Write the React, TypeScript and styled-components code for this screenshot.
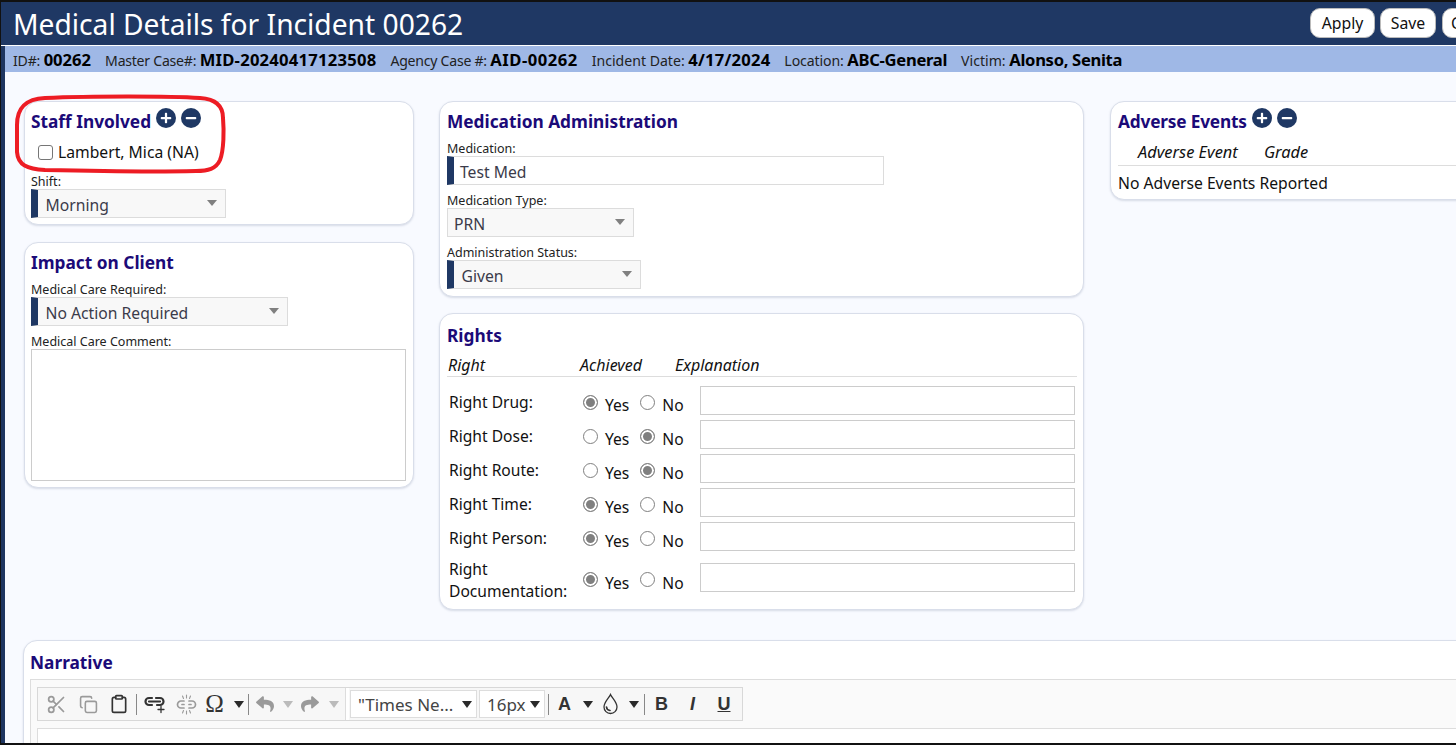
import React from "react";
import styled, { createGlobalStyle } from "styled-components";
import { Scissors, Copy, Clipboard } from "lucide-react";
import { FaReply, FaShare, FaPlus, FaMinus } from "react-icons/fa";

const Global = createGlobalStyle`
  html, body { margin: 0; padding: 0; height: 100%; overflow: hidden; background: #f8faff; }
  * { box-sizing: border-box; }
  body { font-family: "Noto Sans", "Open Sans", sans-serif; color: #111; }
`;
const Frame = styled.div`
  position: relative; width: 1456px; height: 745px; overflow: hidden;
  border-top: 2px solid #111; border-left: 1px solid #111; border-bottom: 2px solid #111;
  background: #f8faff; display: flex;
`;
const Edge = styled.div`width: 4px; flex: none; background: #1e3560;`;
const Page = styled.div`flex: 1; min-width: 0; display: flex; flex-direction: column;`;
const Header = styled.header`
  height: 44px; flex: none; background: #1f3864; border-bottom: 1px solid #fff;
  display: flex; align-items: center; margin-left: -4px; padding-left: 12px;
`;
const Title = styled.h1`flex: 1; margin: 0; font-size: 28.2px; font-weight: 400; color: #fff; white-space: nowrap; line-height: 44px;`;
const Actions = styled.div`display: flex; flex: none; width: 146px; overflow: hidden; margin-top: -2px;`;
const HeadButton = styled.button<{ $w: number; $gap: number }>`
  height: 30px; padding: 0 0 0 ${p => (p.$gap ? 0 : 8)}px; border-radius: 10px; border: 1px solid #bbb; background: #fff;
  font: 400 15.8px "Noto Sans", sans-serif; color: #111; width: ${p => p.$w}px; margin-right: ${p => p.$gap}px; flex: none; text-align: ${p => (p.$gap ? "center" : "left")};
`;
const InfoBar = styled.div`
  height: 26px; flex: none; background: #9fb8e6; display: flex; align-items: center; gap: 14px; padding-left: 8px;
  font-size: 14.1px; white-space: nowrap; color: #222;
`;
const InfoItem = styled.span<{ $ls?: number }>`letter-spacing: ${p => p.$ls ?? 0}px;`;
const InfoValue = styled.b<{ $ls?: number }>`font-size: 16.6px; font-weight: 700; color: #000; letter-spacing: ${p => p.$ls ?? 0}px;`;
const Content = styled.main`
  padding: 29px 0 0 19px; display: flex; flex-direction: column; gap: 30px; width: 1560px;
`;
const Columns = styled.div`display: flex; gap: 26px; align-items: flex-start;`;
const Col = styled.div<{ $w: number; $gap?: number; $shift?: number }>`
  width: ${p => p.$w}px; flex: none; display: flex; flex-direction: column; gap: ${p => p.$gap ?? 17}px; margin-left: ${p => p.$shift ?? 0}px;
`;
const Panel = styled.section<{ $h?: number; $pad?: number; $top?: number }>`
  background: #fff; border: 1px solid #d9deea; border-radius: 14px; box-shadow: 0 1px 2px rgba(120,130,160,.25);
  padding: ${p => p.$top ?? 8}px 6px 0 ${p => p.$pad ?? 6}px; height: ${p => p.$h}px; overflow: hidden;
`;
const PanelHead = styled.div`display: flex; align-items: flex-start; gap: 5px; height: 24px;`;
const PanelTitle = styled.h2<{ $ls?: number }>`margin: 0; font-size: 17.3px; line-height: 24px; font-weight: 700; color: #1b0a78; white-space: nowrap; letter-spacing: ${p => p.$ls ?? 0}px;`;
const RoundIcon = styled.span`
  width: 20px; height: 20px; border-radius: 50%; background: #1f3864; color: #fff; display: inline-flex; align-items: center; justify-content: center; margin-top: -2px; font-size: 12px;
`;
const CheckRow = styled.label`display: flex; align-items: center; gap: 5px; padding-left: 7px; height: 24px; margin-top: 6px; font-size: 15.7px;`;
const Check = styled.span`width: 15px; height: 15px; border: 1.3px solid #767676; border-radius: 3px; background: #fff;`;
const FieldLabel = styled.div`font-size: 12.5px; line-height: 15px; color: #222; white-space: nowrap;`;
const Accent = styled.div<{ $w: number; $flag?: boolean }>`
  width: ${p => p.$w}px; height: 29px; display: flex; align-items: center; justify-content: space-between;
  border: 1px solid #dcdcdc; border-left: ${p => (p.$flag ? "7px solid #1f3864" : "1px solid #dcdcdc")};
  background: #f8f8f8; color: #3b3b4a; font-size: 15.7px; padding: 2px 8px 0 ${p => (p.$flag ? 7.5 : 6)}px;
`;
const TextField = styled(Accent)`background: #fff; border-width: 1px 1px 1px 7px; border-left-color: #1f3864; padding-left: 6px;`;
const Caret = styled.span`width: 0; height: 0; border-left: 5px solid transparent; border-right: 5px solid transparent; border-top: 6px solid #808080; margin-top: -3px;`;
const Stack = styled.div<{ $t?: number }>`margin-top: ${p => p.$t ?? 0}px;`;
const Area = styled.div`width: 375px; height: 132px; border: 1px solid #ccc; background: #fff;`;
const ItalicHead = styled.div`
  display: grid; grid-template-columns: 132px 95px 1fr; font-style: italic; font-size: 16px; line-height: 23px; height: 22px;
  padding: 6px 0 0 1px; border-bottom: 1px solid #ddd; box-sizing: content-box;
`;
const RightRow = styled.div<{ $h: number }>`
  display: grid; grid-template-columns: 134px 119px 375px; align-items: center; height: ${p => p.$h}px; padding-left: 2px; font-size: 15.6px; line-height: 22px;
`;
const RightName = styled.span`position: relative; top: 2px;`;
const Rows = styled.div`margin-top: 6px;`;
const Choice = styled.div`display: flex; align-items: center; gap: 11px; font-size: 15.6px; position: relative; top: 2px;`;
const Opt = styled.span`display: inline-flex; align-items: center; gap: 7px;`;
const OptText = styled.span`position: relative; top: 3px;`;
const Radio = styled.span<{ $on?: boolean }>`
  width: 15px; height: 15px; border-radius: 50%; border: 1.3px solid #808080; background: ${p => (p.$on ? "#808080" : "#fff")};
  box-shadow: inset 0 0 0 ${p => (p.$on ? "2px" : "0")} #fff;
`;
const Blank = styled.div`height: 29px; border: 1px solid #ccc; background: #fff; width: 375px; margin-left: -2px;`;
const AdverseHead = styled.div`
  display: grid; grid-template-columns: 126px 100px 1fr; padding-left: 20px; font-style: italic; font-size: 16.4px; line-height: 26px; height: 27px; margin-top: 5px; border-bottom: 1px solid #ddd;
`;
const Plain = styled.div`font-size: 15.7px; line-height: 22px; margin-top: 6px; white-space: nowrap;`;
const Narrative = styled(Panel)`width: 1500px; height: 130px; margin-left: -1px;`;
const Editor = styled.div`border: 1px solid #ddd; background: #fafafa; margin-top: 4px; height: 120px; padding: 7px 6px 0; width: 1480px;`;
const Toolbar = styled.div`
  width: 706px; height: 34px; display: flex; align-items: center; border: 1px solid #d8d8d8; background: #f7f7f7; padding-left: 2px; color: #333; white-space: nowrap;
`;
const EditBody = styled.div`height: 60px; margin-top: 7px; background: #fff; border: 1px solid #ddd;`;
const Tool = styled.span<{ $w: number; $dim?: boolean }>`
  width: ${p => p.$w}px; flex: none; display: inline-flex; align-items: center; justify-content: center; color: ${p => (p.$dim ? "#9a9a9a" : "#333")}; height: 24px;
`;
const Sep = styled.span<{ $ml?: number }>`width: 1px; height: 21px; background: #888; flex: none; margin-left: ${p => p.$ml ?? 0}px;`;
const GroupBreak = styled.span`width: 4px; height: 32px; background: #fff; border-left: 1px solid #ddd; flex: none; margin: 0 1px 0 2px;`;
const DropDown = styled.span<{ $w: number }>`
  width: ${p => p.$w}px; height: 28px; background: #fff; border: 1px solid #ddd; display: inline-flex; align-items: center; justify-content: space-between; padding: 0 4px 0 7px; font-size: 17px; color: #444; margin-right: 2px; flex: none;
`;
const DarkCaret = styled.span<{ $dim?: boolean }>`width: 0; height: 0; display: inline-block; border-left: 5px solid transparent; border-right: 5px solid transparent; border-top: 7px solid ${p => (p.$dim ? "#bbb" : "#2a2a2a")};`;
const Letter = styled.span<{ $i?: boolean; $u?: boolean }>`font: ${p => (p.$i ? "italic 700" : "700")} 18px "Liberation Sans", sans-serif; text-decoration: ${p => (p.$u ? "underline" : "none")}; color: #333;`;
const OmegaGlyph = styled.span`font: 400 25px "Liberation Serif", serif; color: #333; line-height: 24px;`;
const Callout = styled.svg`position: absolute; left: -1px; top: -2px; pointer-events: none;`;

const rights: [string, boolean, number][] = [
  ["Right Drug:", true, 34], ["Right Dose:", false, 34], ["Right Route:", false, 34],
  ["Right Time:", true, 34], ["Right Person:", true, 34], ["Right Documentation:", true, 49],
];

const Heading = ({ text, ls }: { text: string; ls?: number }) => (
  <PanelHead>
    <PanelTitle $ls={ls}>{text}</PanelTitle>
    <RoundIcon><FaPlus /></RoundIcon>
    <RoundIcon><FaMinus /></RoundIcon>
  </PanelHead>
);

const LinkAdd = () => (
  <svg width="24" height="20" viewBox="0 0 24 20" fill="none" stroke="#333" strokeWidth="2.2" strokeLinecap="round">
    <path d="M9 4H6a3.5 3.5 0 0 0 0 7h3M13 4h4a3.5 3.5 0 0 1 0 7h-3M6 7.5h11" />
    <path d="M18 12.5v6M15 15.5h6" strokeWidth="1.3" />
  </svg>
);
const LinkBreak = () => (
  <svg width="21" height="21" viewBox="0 0 21 21" fill="none" stroke="#9a9a9a" strokeWidth="1.7" strokeLinecap="round">
    <path d="M8 7H5a3.5 3.5 0 0 0 0 7h3M13 7h3a3.5 3.5 0 0 1 0 7h-3M6 10.5h2M13 10.5h2" />
    <path d="M10.5 1v3M6.5 2l1 2.5M14.5 2l-1 2.5M10.5 20v-3M6.5 19l1-2.5M14.5 19l-1-2.5" strokeWidth="1.1" />
  </svg>
);
const Drop = () => (
  <svg width="17" height="22" viewBox="0 0 17 22" fill="none" stroke="#333" strokeWidth="1.3">
    <path d="M8.5 1.5C7 5 2 9 2 14a6.5 6.5 0 0 0 13 0C15 9 10 5 8.5 1.5Z" />
    <path d="M4.5 14c.2 2 1.5 3.3 3.5 3.5" strokeWidth="1.7" strokeLinecap="round" />
  </svg>
);

export default function App() {
  return (
    <Frame>
      <Global />
      <Edge />
      <Page>
        <Header>
          <Title>Medical Details for Incident 00262</Title>
          <Actions>
            <HeadButton $w={65} $gap={5}>Apply</HeadButton>
            <HeadButton $w={56} $gap={6}>Save</HeadButton>
            <HeadButton $w={60} $gap={0}>Cancel</HeadButton>
          </Actions>
        </Header>
        <InfoBar>
          <InfoItem $ls={-0.2}>ID#: <InfoValue>00262</InfoValue></InfoItem>
          <InfoItem $ls={-0.25}>Master Case#: <InfoValue $ls={0.24}>MID-20240417123508</InfoValue></InfoItem>
          <InfoItem $ls={-0.25}>Agency Case #: <InfoValue $ls={0.5}>AID-00262</InfoValue></InfoItem>
          <InfoItem>Incident Date: <InfoValue $ls={0.2}>4/17/2024</InfoValue></InfoItem>
          <InfoItem $ls={-0.1}>Location: <InfoValue $ls={-0.3}>ABC-General</InfoValue></InfoItem>
          <InfoItem>Victim: <InfoValue $ls={-0.32}>Alonso, Senita</InfoValue></InfoItem>
        </InfoBar>
        <Content>
          <Columns>
            <Col $w={390}>
              <Panel $h={124}>
                <Heading text="Staff Involved" />
                <CheckRow><Check />Lambert, Mica (NA)</CheckRow>
                <Stack $t={10}>
                  <FieldLabel>Shift:</FieldLabel>
                  <Accent $w={195} $flag>Morning<Caret /></Accent>
                </Stack>
              </Panel>
              <Panel $h={246}>
                <PanelHead><PanelTitle>Impact on Client</PanelTitle></PanelHead>
                <Stack $t={7}>
                  <FieldLabel>Medical Care Required:</FieldLabel>
                  <Accent $w={257} $flag>No Action Required<Caret /></Accent>
                </Stack>
                <Stack $t={8}>
                  <FieldLabel>Medical Care Comment:</FieldLabel>
                  <Area />
                </Stack>
              </Panel>
            </Col>
            <Col $w={645} $gap={16} $shift={-1}>
              <Panel $h={196} $pad={7}>
                <PanelHead><PanelTitle>Medication Administration</PanelTitle></PanelHead>
                <Stack $t={7}>
                  <FieldLabel>Medication:</FieldLabel>
                  <TextField $w={437}>Test Med</TextField>
                </Stack>
                <Stack $t={8}>
                  <FieldLabel>Medication Type:</FieldLabel>
                  <Accent $w={187}>PRN<Caret /></Accent>
                </Stack>
                <Stack $t={8}>
                  <FieldLabel>Administration Status:</FieldLabel>
                  <Accent $w={194} $flag>Given<Caret /></Accent>
                </Stack>
              </Panel>
              <Panel $h={297} $pad={7} $top={10}>
                <PanelHead><PanelTitle>Rights</PanelTitle></PanelHead>
                <ItalicHead><span>Right</span><span>Achieved</span><span>Explanation</span></ItalicHead>
                <Rows>
                  {rights.map(([name, yes, h]) => (
                    <RightRow key={name} $h={h}>
                      <RightName>{name}</RightName>
                      <Choice>
                        <Opt><Radio $on={yes} /><OptText>Yes</OptText></Opt>
                        <Opt><Radio $on={!yes} /><OptText>No</OptText></Opt>
                      </Choice>
                      <Blank />
                    </RightRow>
                  ))}
                </Rows>
              </Panel>
            </Col>
            <Col $w={400}>
              <Panel $h={99} $pad={7}>
                <Heading text="Adverse Events" ls={-0.2} />
                <AdverseHead><span>Adverse Event</span><span>Grade</span></AdverseHead>
                <Plain>No Adverse Events Reported</Plain>
              </Panel>
            </Col>
          </Columns>
          <Narrative $top={10}>
            <PanelTitle>Narrative</PanelTitle>
            <Editor>
              <Toolbar>
                <Tool $w={32} $dim><Scissors size={21} /></Tool>
                <Tool $w={32} $dim><Copy size={19} /></Tool>
                <Tool $w={30}><Clipboard size={20} /></Tool>
                <Sep $ml={2} />
                <Tool $w={35}><LinkAdd /></Tool>
                <Tool $w={28}><LinkBreak /></Tool>
                <Tool $w={29}><OmegaGlyph>Ω</OmegaGlyph></Tool>
                <Tool $w={19}><DarkCaret /></Tool>
                <Sep />
                <Tool $w={32} $dim><FaReply size={18} /></Tool>
                <Tool $w={14}><DarkCaret $dim /></Tool>
                <Tool $w={30} $dim><FaShare size={18} /></Tool>
                <Tool $w={18}><DarkCaret $dim /></Tool>
                <GroupBreak />
                <DropDown $w={127}>"Times Ne...<DarkCaret /></DropDown>
                <DropDown $w={66}>16px<DarkCaret /></DropDown>
                <Sep $ml={1} />
                <Tool $w={31}><Letter>A</Letter></Tool>
                <Tool $w={16}><DarkCaret /></Tool>
                <Tool $w={29}><Drop /></Tool>
                <Tool $w={18}><DarkCaret /></Tool>
                <Sep $ml={1} />
                <Tool $w={33}><Letter>B</Letter></Tool>
                <Tool $w={29}><Letter $i>I</Letter></Tool>
                <Tool $w={34}><Letter $u>U</Letter></Tool>
              </Toolbar>
              <EditBody />
            </Editor>
          </Narrative>
        </Content>
      </Page>
      <Callout width="240" height="180" viewBox="0 0 240 180">
        <path d="M17 125C17 108 25 99 45 98C90 96 170 96 200 98C216 99 223 106 223 118C224 130 224 150 220 160C216 169 208 171 196 171C150 172 90 171 45 170C27 169 18 165 17 152Z" fill="none" stroke="#ed1c24" strokeWidth="4" />
      </Callout>
    </Frame>
  );
}
